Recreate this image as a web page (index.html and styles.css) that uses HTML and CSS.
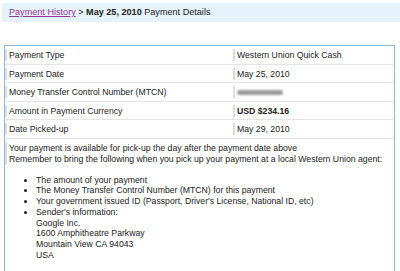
FILE: index.html
```html
<!DOCTYPE html>
<html>
<head>
<meta charset="utf-8">
<link rel="stylesheet" href="styles.css">
</head>
<body>
<div class="crumb"><a class="crumb-link" href="#">Payment History</a> &gt; <b>May 25, 2010</b> Payment Details</div>
<div class="box">
  <div class="row"><div class="cell"><span class="mark">Payment Type</span></div><div class="cell"><span class="mark">Western Union Quick Cash</span></div></div>
  <div class="row"><div class="cell"><span class="mark">Payment Date</span></div><div class="cell"><span class="mark">May 25, 2010</span></div></div>
  <div class="row"><div class="cell"><span class="mark">Money Transfer Control Number (MTCN)</span></div><div class="cell"><span class="mark"><span class="redacted"></span></span></div></div>
  <div class="row"><div class="cell"><span class="mark">Amount in Payment Currency</span></div><div class="cell"><span class="mark"><b>USD $234.16</b></span></div></div>
  <div class="row"><div class="cell"><span class="mark">Date Picked-up</span></div><div class="cell"><span class="mark">May 29, 2010</span></div></div>
  <div class="note">
    <p class="intro">Your payment is available for pick-up the day after the payment date above<br>Remember to bring the following when you pick up your payment at a local Western Union agent:</p>
    <ul class="items">
      <li>The amount of your payment</li>
      <li>The Money Transfer Control Number (MTCN) for this payment</li>
      <li>Your government issued ID (Passport, Driver's License, National ID, etc)</li>
      <li>Sender's information:<br>Google Inc.<br>1600 Amphitheatre Parkway<br>Mountain View CA 94043<br>USA</li>
    </ul>
  </div>
</div>
</body>
</html>
```
FILE: styles.css
```css
html, body {
  margin: 0;
  padding: 0;
  background: #ffffff;
}
body {
  font-family: "Liberation Sans", Arial, sans-serif;
  font-size: 8.7px;
  color: #222222;
  overflow: hidden;
}
.crumb {
  margin: 3px 0 0 2px;
  height: 19px;
  line-height: 19px;
  padding-left: 7px;
  background: #e5f3fc;
  font-size: 9.1px;
}
.crumb-link {
  color: #993399;
  text-decoration: underline;
}
.box {
  margin: 23px 0 0 4px;
  width: 389px;
  min-height: 260px;
  border: 1px solid #8db5de;
}
.row {
  display: grid;
  grid-template-columns: 228px 1fr;
  border-bottom: 1px solid #e4e4e4;
  padding: 3px 0 2.5px;
}
.mark {
  display: inline-block;
  border-left: 2px solid #dcdcdc;
  padding-left: 2px;
  line-height: 12px;
  height: 12px;
  vertical-align: top;
}
.redacted {
  display: inline-block;
  width: 46px;
  height: 5px;
  margin-top: 4px;
  border-radius: 3px;
  background: #9a9a9a;
  filter: blur(1.3px);
}
.note {
  padding-top: 4px;
}
.intro {
  margin: 0 0 10px;
  border-left: 2px solid #dcdcdc;
  padding-left: 2px;
  line-height: 11px;
}
.items {
  margin: 0;
  padding-left: 31px;
  line-height: 10.8px;
}
```
